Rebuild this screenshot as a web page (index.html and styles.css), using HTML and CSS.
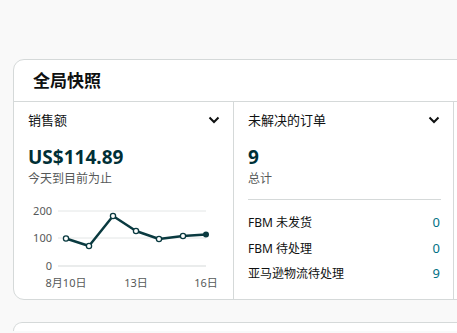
FILE: index.html
```html
<!DOCTYPE html>
<html>
<head>
	<meta charset="UTF-8">
	<title>全局快照</title>
	<link rel="stylesheet" href="styles.css">
</head>
<body>
	<div class="card">
		<div class="card-head">全局快照</div>
		<div class="cols">
			<!--sales column-->
			<div class="col">
				<div class="col-title">销售额
					<svg class="chev" width="12" height="8" viewBox="0 0 12 8"><path d="M1.5 1.5 L6 6 L10.5 1.5" fill="none" stroke="#0f1111" stroke-width="2"/></svg>
				</div>
				<div class="big">US$114.89</div>
				<div class="sub">今天到目前为止</div>
				<svg class="chart" width="220" height="95" viewBox="0 0 220 95">
					<line x1="44" y1="11" x2="192" y2="11" stroke="#e3e6e6"/>
					<line x1="44" y1="38" x2="192" y2="38" stroke="#e3e6e6"/>
					<line x1="44" y1="66" x2="192" y2="66" stroke="#d5d9d9"/>
					<text x="38" y="15" class="axis" text-anchor="end">200</text>
					<text x="38" y="42" class="axis" text-anchor="end">100</text>
					<text x="38" y="70" class="axis" text-anchor="end">0</text>
					<polyline points="52,38.5 75,46 99,16 122,31 145,39 169,36 192,34.5" fill="none" stroke="#0a3a40" stroke-width="2.5" stroke-linejoin="round"/>
					<circle cx="52" cy="38.5" r="2.6" fill="#fff" stroke="#0a3a40" stroke-width="1.3"/>
					<circle cx="75" cy="46" r="2.6" fill="#fff" stroke="#0a3a40" stroke-width="1.3"/>
					<circle cx="99" cy="16" r="2.6" fill="#fff" stroke="#0a3a40" stroke-width="1.3"/>
					<circle cx="122" cy="31" r="2.6" fill="#fff" stroke="#0a3a40" stroke-width="1.3"/>
					<circle cx="145" cy="39" r="2.6" fill="#fff" stroke="#0a3a40" stroke-width="1.3"/>
					<circle cx="169" cy="36" r="2.6" fill="#fff" stroke="#0a3a40" stroke-width="1.3"/>
					<circle cx="192" cy="34.5" r="3" fill="#0a3a40"/>
					<text x="52" y="87" class="axis" text-anchor="middle">8月10日</text>
					<text x="122" y="87" class="axis" text-anchor="middle">13日</text>
					<text x="192" y="87" class="axis" text-anchor="middle">16日</text>
				</svg>
			</div>
			<!--orders column-->
			<div class="col">
				<div class="col-title">未解决的订单
					<svg class="chev" width="12" height="8" viewBox="0 0 12 8"><path d="M1.5 1.5 L6 6 L10.5 1.5" fill="none" stroke="#0f1111" stroke-width="2"/></svg>
				</div>
				<div class="big">9</div>
				<div class="sub">总计</div>
				<div class="rows">
					<div class="row"><span>FBM 未发货</span><span class="num">0</span></div>
					<div class="row"><span>FBM 待处理</span><span class="num">0</span></div>
					<div class="row"><span>亚马逊物流待处理</span><span class="num">9</span></div>
				</div>
			</div>
			<div class="col"></div>
		</div>
	</div>
	<div class="card card-next"></div>
</body>
</html>
```

FILE: styles.css
```css
body {
	margin: 0;
	padding: 59px 0 0 13px;
	background-color: #f9f9f9;
	font-family: "Noto Sans", "Noto Sans CJK SC", sans-serif;
	color: #0f1111;
	overflow: hidden;
	height: 333px;
	box-sizing: border-box;
}

.card {
	width: 480px;
	background-color: #fff;
	border: 1px solid #d5d9d9;
	border-radius: 11px;
}

.card-next {
	margin-top: 22px;
	height: 8px;
	border-bottom: none;
	border-radius: 11px 11px 0 0;
}

.card-head { /*title bar*/
	height: 41px;
	padding-left: 19px;
	font-size: 17px;
	font-weight: bold;
	line-height: 41px;
	color: #0f1111;
	border-bottom: 1px solid #d5d9d9;
}

.cols {
	display: flex;
	height: 197px;
}

.col {
	width: 220px;
	flex: none;
	box-sizing: border-box;
	padding: 8px 12px 0 14px;
	border-right: 1px solid #d5d9d9;
}

.col-title {
	display: flex;
	justify-content: space-between;
	align-items: center;
	font-size: 13px;
	line-height: 20px;
	padding-right: 1px;
}

.big {
	margin-top: 14px;
	font-size: 19px;
	font-weight: bold;
	line-height: 26px;
	color: #002f36;
}

.sub {
	font-size: 12px;
	line-height: 18px;
	color: #565959;
}

.chart {
	display: block;
	margin: 12px 0 0 -14px;
}

.axis {
	font-size: 11px;
	fill: #565959;
	font-family: "Noto Sans", "Noto Sans CJK SC", sans-serif;
}

.rows {
	margin-top: 11px;
	border-top: 1px solid #d5d9d9;
	padding-top: 10px;
}

.row {
	display: flex;
	justify-content: space-between;
	font-size: 12px;
	line-height: 25.5px;
	color: #0f1111;
}

.num {
	font-size: 13px;
	color: #007185;
	padding-right: 1px;
}
```
